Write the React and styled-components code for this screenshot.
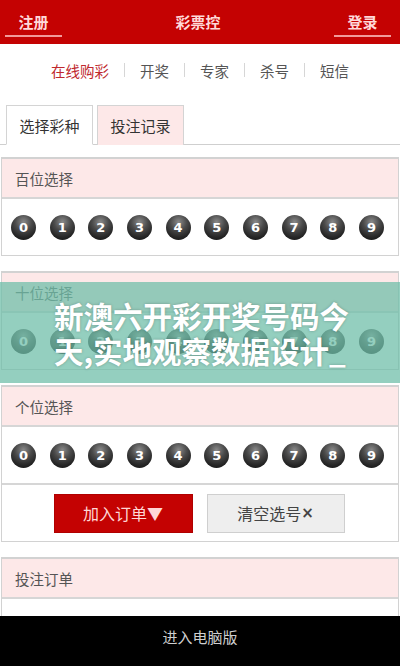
import React from "react";
import styled, { createGlobalStyle } from "styled-components";

const Global = createGlobalStyle`
  html, body { margin: 0; padding: 0; background: #fff; }
  body { font-family: "Noto Sans CJK SC", "Noto Sans", sans-serif; }
  * { box-sizing: border-box; }
`;

const Page = styled.div`
  position: relative;
  width: 400px;
  height: 666px;
  display: flex;
  flex-direction: column;
  overflow: hidden;
`;

const Content = styled.div`
  flex: 1;
  overflow: hidden;
`;

const Header = styled.div`
  height: 44px;
  background: #c40202;
  display: flex;
  justify-content: space-between;
  align-items: flex-start;
  padding: 0 9px 0 5px;
`;

const HeadLink = styled.div`
  width: 57px;
  padding-top: 12px;
  height: 37px;
  font-size: 15px;
  line-height: 20px;
  font-weight: bold;
  text-align: center;
  color: #ffd9d9;
  border-bottom: 2px solid #f29a9a;
`;

const HeadTitle = styled.div`
  padding-top: 12px;
  font-size: 15px;
  line-height: 20px;
  font-weight: bold;
  color: #ffd9d9;
`;

const Nav = styled.div`
  height: 52px;
  display: flex;
  justify-content: center;
  align-items: center;
  font-size: 14.5px;
`;

const NavItem = styled.span`
  color: ${(p) => (p.$active ? "#c0282d" : "#555")};
`;

const NavSep = styled.span`
  width: 1px;
  height: 14px;
  background: #d6d6d6;
  margin: 0 15px;
`;

const Tabs = styled.div`
  margin-top: 9px;
  padding-left: 6px;
  height: 40px;
  display: flex;
  gap: 4px;
  border-bottom: 1px solid #cfcfcf;
`;

const Tab = styled.div`
  width: 87px;
  height: 40px;
  display: flex;
  align-items: center;
  justify-content: center;
  font-size: 15px;
  color: #333;
  border: 1px solid #d4d4d4;
  border-bottom: ${(p) => (p.$active ? "1px solid #fff" : "none")};
  background: ${(p) => (p.$active ? "#fff" : "#fde8e8")};
`;

const Panel = styled.div`
  margin: ${(p) => p.$top || 15}px 1px 0;
  border: 1px solid #d2d2d2;
  border-width: 2px 1px 1px;
`;

const PanelHead = styled.div`
  height: 40px;
  background: #fde8e8;
  display: flex;
  align-items: center;
  padding-left: 13px;
  font-size: 14.5px;
  color: #555;
  border-bottom: 2px solid #d6d6d6;
`;

const BallRow = styled.div`
  height: 56px;
  display: flex;
  align-items: center;
  justify-content: space-between;
  padding: 0 14px 0 9px;
`;

const Ball = styled.span`
  width: 25px;
  height: 25px;
  border-radius: 50%;
  background: radial-gradient(circle at 50% 28%, #8a8a8a 0%, #4a4a4a 38%, #262626 70%, #0e0e0e 100%);
  color: #fff;
  font-family: "DejaVu Sans", Verdana, sans-serif;
  font-weight: bold;
  font-size: 13px;
  display: flex;
  align-items: center;
  justify-content: center;
`;

const ButtonRow = styled.div`
  height: 58px;
  border-top: 2px solid #d6d6d6;
  display: flex;
  justify-content: center;
  align-items: center;
  gap: 14px;
  padding-right: 2px;
`;

const Button = styled.div`
  width: ${(p) => p.$w}px;
  height: 39px;
  display: flex;
  align-items: center;
  justify-content: center;
  font-size: 16px;
  color: ${(p) => (p.$primary ? "#ffd6d6" : "#444")};
  background: ${(p) => (p.$primary ? "#c40202" : "#eeeeee")};
  border: 1px solid ${(p) => (p.$primary ? "#b00000" : "#cfcfcf")};
`;

const Mark = styled.b`
  font-family: "DejaVu Sans", sans-serif;
  font-size: 15px;
`;

const PanelBody = styled.div`
  height: 19px;
  border-bottom: 2px solid #d6d6d6;
`;

const Footer = styled.div`
  height: 50px;
  background: #000;
  color: #cfcfcf;
  font-size: 15px;
  text-align: center;
  padding-top: 10px;
`;

const Overlay = styled.div`
  position: absolute;
  left: 0;
  right: 0;
  top: 282px;
  height: 101px;
  background: rgba(110, 190, 168, 0.74);
  display: flex;
  justify-content: center;
  align-items: center;
`;

const OverlayText = styled.div`
  width: 300px;
  font-size: 29.5px;
  line-height: 35px;
  font-weight: bold;
  color: #fff;
  word-break: break-all;
  text-shadow: 0 0 3px rgba(0, 0, 0, 0.25);
  padding-left: 4px;
`;

const digits = [0, 1, 2, 3, 4, 5, 6, 7, 8, 9];

function Balls() {
  return (
    <BallRow>
      {digits.map((d) => (
        <Ball key={d}>{d}</Ball>
      ))}
    </BallRow>
  );
}

const navItems = ["在线购彩", "开奖", "专家", "杀号", "短信"];

export default function App() {
  return (
    <Page>
      <Global />
      <Content>
        <Header>
          <HeadLink>注册</HeadLink>
          <HeadTitle>彩票控</HeadTitle>
          <HeadLink>登录</HeadLink>
        </Header>
        <Nav>
          {navItems.map((n, i) => (
            <React.Fragment key={n}>
              {i > 0 && <NavSep />}
              <NavItem $active={i === 0}>{n}</NavItem>
            </React.Fragment>
          ))}
        </Nav>
        <Tabs>
          <Tab $active>选择彩种</Tab>
          <Tab>投注记录</Tab>
        </Tabs>
        <Panel $top={12}>
          <PanelHead>百位选择</PanelHead>
          <Balls />
        </Panel>
        <Panel>
          <PanelHead>十位选择</PanelHead>
          <Balls />
        </Panel>
        <Panel>
          <PanelHead>个位选择</PanelHead>
          <Balls />
          <ButtonRow>
            <Button $primary $w={139}>加入订单▼</Button>
            <Button $w={138}>清空选号<Mark>×</Mark></Button>
          </ButtonRow>
        </Panel>
        <Panel>
          <PanelHead>投注订单</PanelHead>
          <PanelBody />
        </Panel>
      </Content>
      <Footer>进入电脑版</Footer>
      <Overlay>
        <OverlayText>新澳六开彩开奖号码今天,实地观察数据设计_</OverlayText>
      </Overlay>
    </Page>
  );
}
